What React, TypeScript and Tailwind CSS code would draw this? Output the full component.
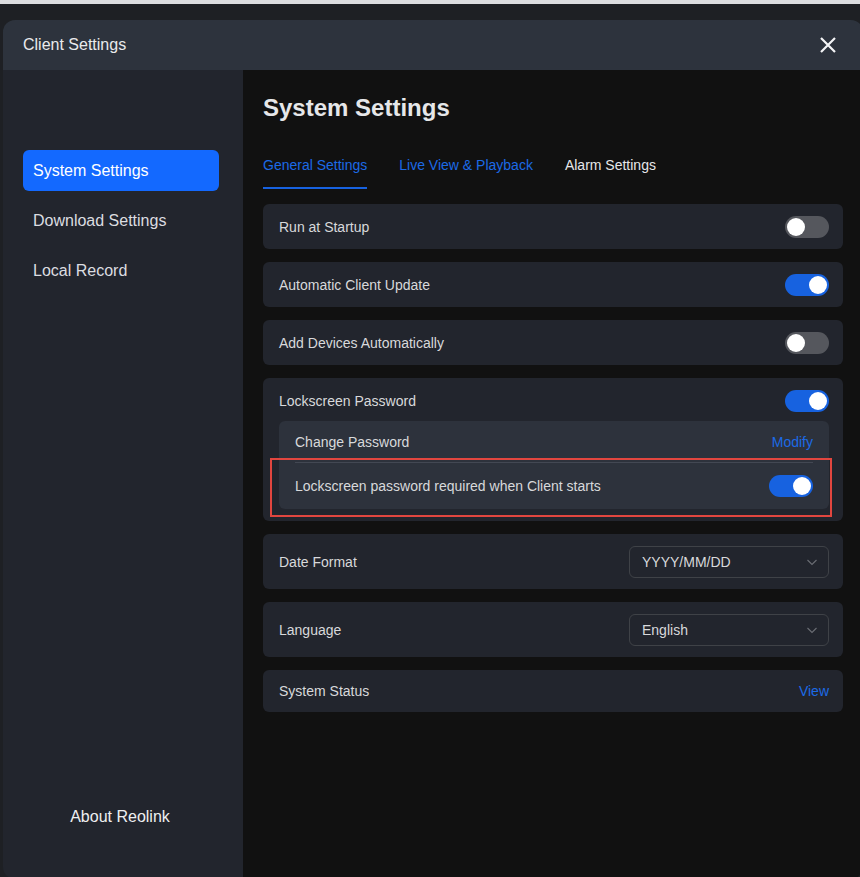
import React from "react";

function Toggle({ on }: { on: boolean }) {
  return (
    <div
      className={
        on
          ? "flex h-[22px] w-[44px] items-center justify-end rounded-full bg-[#1762e0] px-[2px]"
          : "flex h-[22px] w-[44px] items-center justify-start rounded-full bg-[#55575d] px-[2px]"
      }
    >
      <div className="h-[18px] w-[18px] rounded-full bg-white" />
    </div>
  );
}

function Select({ value }: { value: string }) {
  return (
    <div className="flex h-[32px] w-[200px] items-center justify-between rounded-md border border-[#3f4247] pl-3 pr-[10px] text-sm text-[#d8d9db]">
      <span>{value}</span>
      <svg width="12" height="12" viewBox="0 0 12 12" fill="none">
        <path d="M1.5 4l4.5 4.5L10.5 4" stroke="#6b6e74" strokeWidth="1.1" />
      </svg>
    </div>
  );
}

function Row({
  label,
  children,
  tall,
}: {
  label: string;
  children: React.ReactNode;
  tall?: boolean;
}) {
  return (
    <div
      className={
        "flex items-center justify-between rounded-md bg-[#22252d] pl-4 pr-[14px] " +
        (tall ? "h-[55px]" : "h-[45px]")
      }
    >
      <span className="text-sm text-[#d8d9db]">{label}</span>
      {children}
    </div>
  );
}

export default function App() {
  const nav = ["System Settings", "Download Settings", "Local Record"];
  const tabs = ["General Settings", "Live View & Playback", "Alarm Settings"];

  return (
    <div className="h-[877px] w-[860px] overflow-hidden bg-[#1e2024] font-['Liberation_Sans',Arial,sans-serif]">
      <div className="h-[4px] bg-[#dcdde0]" />
      <div className="ml-[3px] mt-[16px] flex h-[859px] w-[860px] flex-col overflow-hidden rounded-xl">
        <div className="flex h-[50px] shrink-0 items-center justify-between bg-[#2d333d] pl-5 pr-[20px]">
          <span className="text-base text-[#e9eaec]">Client Settings</span>
          <svg width="18" height="18" viewBox="0 0 18 18" className="mr-[6px]">
            <path d="M2 2l14 14M16 2L2 16" stroke="#f3f4f6" strokeWidth="2.2" />
          </svg>
        </div>
        <div className="flex flex-1">
          <aside className="flex w-[240px] shrink-0 flex-col bg-[#22252d] pb-[50px] pl-5 pr-6 pt-[80px]">
            <div className="flex flex-col gap-[9px]">
              {nav.map((n, i) => (
                <div
                  key={n}
                  className={
                    i === 0
                      ? "flex h-[41px] items-center rounded-md bg-[#1369ff] px-[10px] text-base text-white"
                      : "flex h-[41px] items-center px-[10px] text-base text-[#dcdde0]"
                  }
                >
                  {n}
                </div>
              ))}
            </div>
            <div className="mt-auto pr-[2px] text-center text-base text-[#eeeff1]">
              About Reolink
            </div>
          </aside>
          <main className="flex-1 bg-[#111111] pl-5 pr-[20px] pt-[24px]">
            <h1 className="text-[24px] font-bold leading-[28px] text-[#e6e7e9]">
              System Settings
            </h1>
            <div className="mt-[33px] flex gap-8 text-sm">
              {tabs.map((t, i) => (
                <div
                  key={t}
                  className={
                    i === 0
                      ? "border-b-2 border-[#1762e0] pb-[12px] text-[#1c6ae6]"
                      : i === 1
                      ? "pb-[12px] text-[#1c6ae6]"
                      : "pb-[12px] text-[#e6e7e9]"
                  }
                >
                  {t}
                </div>
              ))}
            </div>
            <div className="mt-[15px] flex w-[580px] flex-col gap-[13px]">
              <Row label="Run at Startup">
                <Toggle on={false} />
              </Row>
              <Row label="Automatic Client Update">
                <Toggle on />
              </Row>
              <Row label="Add Devices Automatically">
                <Toggle on={false} />
              </Row>
              <div className="rounded-md bg-[#22252d] pb-[12px] pl-4 pr-[14px] pt-[12px]">
                <div className="flex items-center justify-between">
                  <span className="text-sm text-[#d8d9db]">Lockscreen Password</span>
                  <Toggle on />
                </div>
                <div className="mt-[9px] rounded-md bg-[#2d323c] px-4">
                  <div className="flex h-[42px] items-center justify-between border-b border-[#434853]">
                    <span className="text-sm text-[#d8d9db]">Change Password</span>
                    <span className="text-sm text-[#1c6ae6]">Modify</span>
                  </div>
                  <div className="relative flex h-[46px] items-center justify-between">
                    <span className="text-sm text-[#d8d9db]">
                      Lockscreen password required when Client starts
                    </span>
                    <Toggle on />
                    <div className="absolute -bottom-[8px] -left-[25px] -right-[19px] -top-[5px] border-2 border-[#e2463f]" />
                  </div>
                </div>
              </div>
              <Row label="Date Format" tall>
                <Select value="YYYY/MM/DD" />
              </Row>
              <Row label="Language" tall>
                <Select value="English" />
              </Row>
              <div className="flex h-[42px] items-center justify-between rounded-md bg-[#22252d] pl-4 pr-[14px]">
                <span className="text-sm text-[#d8d9db]">System Status</span>
                <span className="text-sm text-[#1c6ae6]">View</span>
              </div>
            </div>
          </main>
        </div>
      </div>
    </div>
  );
}
